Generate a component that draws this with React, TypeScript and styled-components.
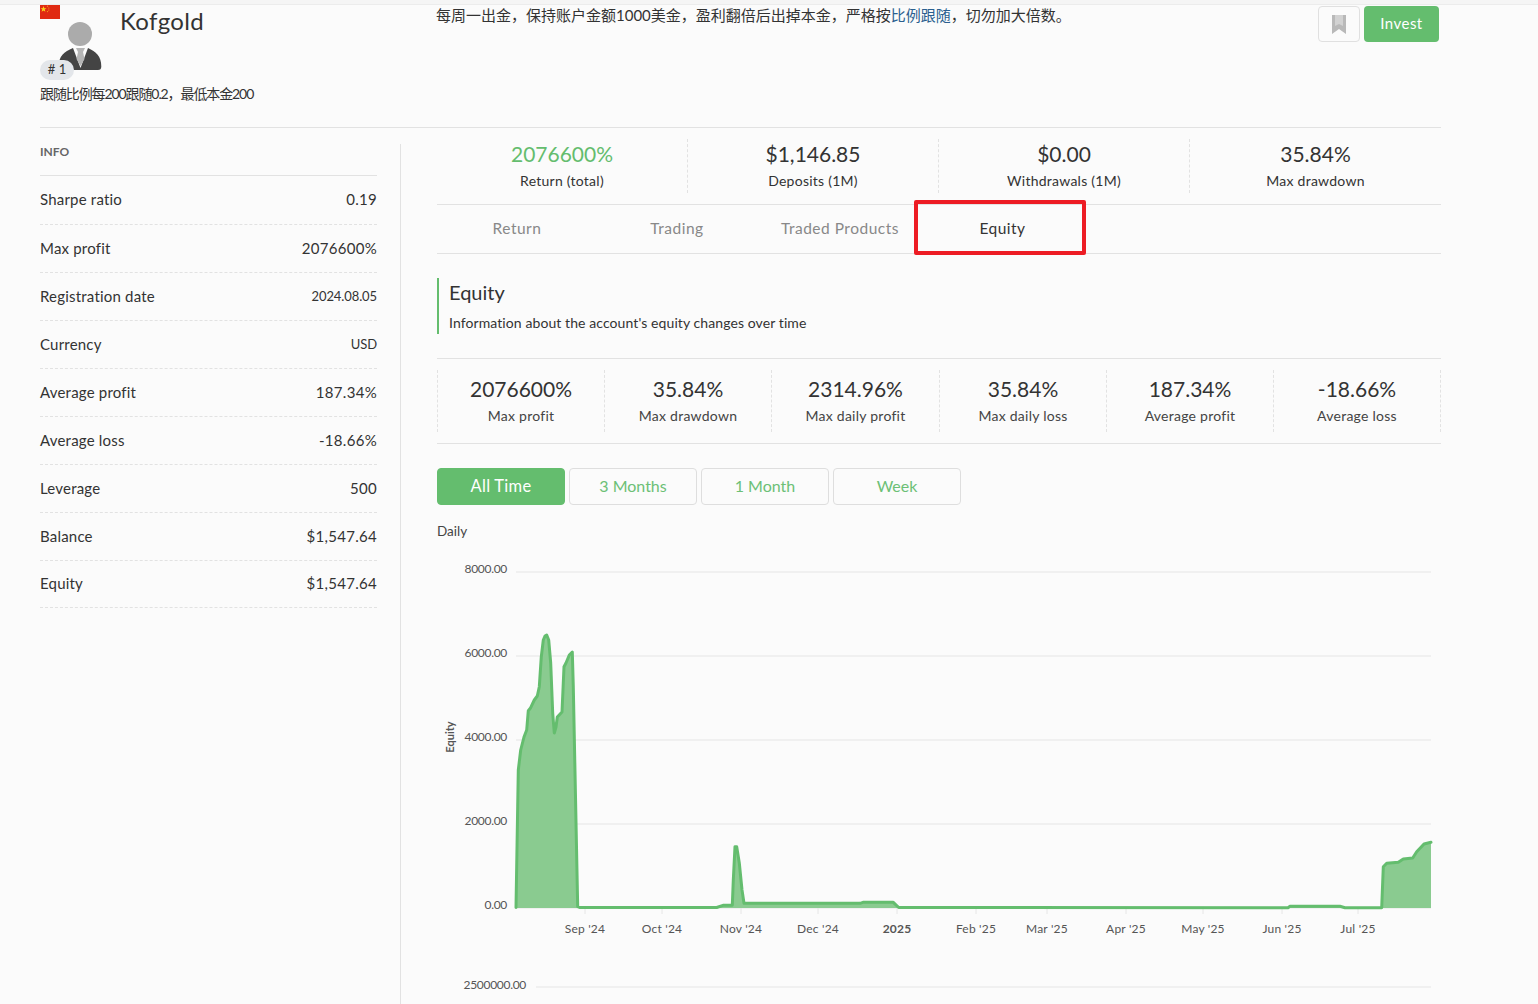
import React from "react";
import styled, { createGlobalStyle } from "styled-components";

const Global = createGlobalStyle`
  html, body { margin: 0; padding: 0; height: 1004px; overflow: hidden; background: #fbfbfb; }
  body { font-family: "Lato", "Noto Sans CJK SC", sans-serif; color: #333; font-size: 14px; }
  * { box-sizing: border-box; }
`;

const green = "#64bd6e";

const Page = styled.div`
  width: 1538px;
  height: 1004px;
  overflow: hidden;
  position: relative;
`;
const TopBand = styled.div`
  height: 5px;
  background: #f5f5f5;
  border-bottom: 1px solid #ececec;
`;
const Container = styled.div`
  padding: 0 97px 0 40px;
`;
const Header = styled.header`
  display: flex;
  height: 123px;
  border-bottom: 1px solid #e2e2e2;
`;
const Identity = styled.div`
  width: 396px;
  flex: none;
`;
const AvatarRow = styled.div`
  display: flex;
  height: 75px;
`;
const AvatarBox = styled.div`
  position: relative;
  width: 80px;
  height: 75px;
  flex: none;
`;
const Flag = styled.svg`
  position: absolute;
  left: 0;
  top: 0;
  width: 20px;
  height: 14px;
`;
const Avatar = styled.svg`
  position: absolute;
  left: 18px;
  top: 17px;
  width: 44px;
  height: 48px;
`;
const RankBadge = styled.span`
  position: absolute;
  left: 0;
  top: 55px;
  width: 34px;
  height: 20px;
  border-radius: 10px;
  background: #e3e6ea;
  font-size: 13px;
  line-height: 18px;
  text-align: center;
  color: #333;
`;
const Name = styled.h1`
  margin: 1px 0 0;
  font-size: 24px;
  line-height: 29px;
  font-weight: 400;
  color: #333;
  letter-spacing: 0.35px;
`;
const Note = styled.p`
  margin: 5px 0 0;
  font-size: 14px;
  line-height: 18px;
  letter-spacing: -1.1px;
  color: #333;
`;
const Description = styled.p`
  flex: 1;
  margin: 1px 0 0;
  font-size: 15px;
  line-height: 18px;
  color: #333;
`;
const Link = styled.span`
  color: #2a5f8f;
`;
const Actions = styled.div`
  display: flex;
  gap: 4px;
  padding: 1px 2px 0 0;
  align-items: flex-start;
`;
const BookmarkButton = styled.button`
  width: 42px;
  height: 36px;
  padding: 0;
  background: #fbfbfb;
  border: 1px solid #e0e0e0;
  border-radius: 4px;
  display: flex;
  align-items: center;
  justify-content: center;
`;
const InvestButton = styled.button`
  width: 75px;
  height: 36px;
  border: 0;
  padding: 0 0 3px;
  border-radius: 4px;
  background: ${green};
  color: #fff;
  font: inherit;
  font-size: 15px;
  letter-spacing: 0.45px;
`;
const Body = styled.div`
  display: flex;
`;
const Sidebar = styled.aside`
  width: 361px;
  flex: none;
  margin-top: 16px;
  padding-right: 23px;
  border-right: 1px solid #e2e2e2;
  height: 900px;
`;
const InfoTitle = styled.h2`
  margin: 0;
  height: 32px;
  border-bottom: 1px solid #e2e2e2;
  font-size: 12px;
  line-height: 16px;
  font-weight: 700;
  color: #666;
`;
const InfoRow = styled.div`
  display: flex;
  justify-content: space-between;
  align-items: center;
  height: 48px;
  padding-bottom: 1px;
  border-bottom: 1px dashed #e2e2e2;
  font-size: 15px;
  letter-spacing: 0.2px;
  color: #333;
  &:nth-child(2) { height: 49px; padding-bottom: 3px; }
  &:last-child { height: 47px; padding-bottom: 3px; }
`;
const InfoValue = styled.span<{ $small?: boolean }>`
  font-size: ${(p) => (p.$small ? "13px" : "15px")};
  letter-spacing: ${(p) => (p.$small ? "-0.1px" : "0.3px")};
`;
const Main = styled.main`
  width: 1004px;
  margin-left: 36px;
`;
const Summary = styled.div`
  display: grid;
  grid-template-columns: repeat(4, 1fr);
  padding-top: 11px;
  height: 77px;
  border-bottom: 1px solid #e2e2e2;
`;
const SummaryItem = styled.div`
  height: 54px;
  border-right: 1px dashed #e2e2e2;
  text-align: center;
  &:last-child { border-right: 0; }
`;
const Value = styled.div<{ $green?: boolean }>`
  font-size: 21px;
  line-height: 30px;
  margin-bottom: 2px;
  color: ${(p) => (p.$green ? green : "#333")};
`;
const Caption = styled.div`
  font-size: 14px;
  line-height: 20px;
  letter-spacing: 0.25px;
  color: #333;
`;
const Tabs = styled.nav`
  display: flex;
  height: 49px;
  border-bottom: 1px solid #e2e2e2;
`;
const Tab = styled.div<{ $active?: boolean; $w: number }>`
  width: ${(p) => p.$w}px;
  text-align: center;
  line-height: 46px;
  font-size: 15.5px;
  letter-spacing: 0.5px;
  color: ${(p) => (p.$active ? "#333" : "#888")};
`;
const Marker = styled.div`
  position: absolute;
  left: 914px;
  top: 200px;
  width: 172px;
  height: 55px;
  border: 4px solid #ed1c24;
  border-radius: 2px;
`;
const SectionHead = styled.div`
  margin-top: 24px;
  height: 56px;
  padding-left: 10px;
  border-left: 2px solid ${green};
`;
const SectionTitle = styled.h3`
  margin: 0;
  font-size: 20px;
  line-height: 28px;
  font-weight: 400;
  color: #333;
`;
const SectionText = styled.p`
  margin: 7px 0 0;
  font-size: 14px;
  line-height: 20px;
  letter-spacing: 0.09px;
  color: #333;
`;
const Metrics = styled.div`
  display: grid;
  grid-template-columns: 167px 167px 168px 167px 167px 168px;
  margin-top: 24px;
  padding: 11px 0;
  border-top: 1px solid #e2e2e2;
  border-bottom: 1px solid #e2e2e2;
  height: 86px;
`;
const MetricItem = styled.div`
  height: 62px;
  border-left: 1px dashed #e2e2e2;
  text-align: center;
  &:last-child { border-right: 1px dashed #e2e2e2; }
`;
const MetricValue = styled.div`
  font-size: 21px;
  line-height: 38px;
  margin-bottom: 2px;
  color: #333;
`;
const MetricCaption = styled.div`
  font-size: 14px;
  line-height: 12px;
  letter-spacing: 0.25px;
  color: #444;
`;
const Ranges = styled.div`
  display: flex;
  gap: 4px;
  margin-top: 24px;
`;
const RangeButton = styled.button<{ $active?: boolean }>`
  width: 128px;
  height: 37px;
  padding: 0 0 2px;
  border-radius: 4px;
  border: 1px solid ${(p) => (p.$active ? green : "#dedede")};
  background: ${(p) => (p.$active ? green : "#fbfbfb")};
  color: ${(p) => (p.$active ? "#fff" : "#6cc076")};
  font: inherit;
  font-size: ${(p) => (p.$active ? "16.5px" : "16px")};
  letter-spacing: ${(p) => (p.$active ? "0.3px" : "0")};
`;
const ChartTitle = styled.div`
  margin-top: 17px;
  font-size: 13.5px;
  line-height: 18px;
  color: #444;
`;
const ChartSvg = styled.svg`
  display: block;
  margin-top: 9px;
  width: 1004px;
  height: 465px;
  font-family: "Lato", sans-serif;
`;
const AxisText = styled.text`
  font-size: 12px;
  fill: #555;
  letter-spacing: -0.3px;
`;
const MonthText = styled.text<{ $bold?: boolean }>`
  font-size: 12px;
  fill: #555;
  font-weight: ${(p) => (p.$bold ? 700 : 400)};
  letter-spacing: 0.2px;
`;

const pts: [number, number][] = [
  [516,907.5],[518.3,770],[520.7,750],[524,737],[526.7,730],[528.3,710.7],[530.7,707.7],[534.3,700],[537.3,696],[539.3,686.7],
  [541.3,656.7],[543.3,640],[545,636],[546.7,635],[548.7,640],[550.7,663],[552.7,713],[554.3,733],[556,727],[557.3,717],[562,712],
  [564,666.7],[566,663],[569.3,655],[572.3,652],[573.3,687],[577.7,906.7],[580,907.5],[716.7,907.5],[723,905.3],[732.3,905.3],
  [733.3,880],[735,846.7],[736.7,846.7],[739.3,863],[742,890],[744,903.3],[860,903.3],[863,902.3],[893.3,902.3],[898.7,907.5],
  [1288,907.7],[1290,906.3],[1340,906.3],[1345,907.7],[1381.7,907.7],[1383.3,866.7],[1386.7,863.3],[1398.3,862.3],[1403.3,859],
  [1412.7,858],[1416.7,851.7],[1424,844],[1431,842.3],
];
const OX = 437;
const OY = 549;
const line = pts.map(([x, y]) => `${(x - OX).toFixed(1)},${(y - OY).toFixed(1)}`).join(" ");
const area = `${line} ${1431 - OX},${908 - OY} ${516 - OX},${908 - OY}`;

const yTicks = [
  ["8000.00", 572],
  ["6000.00", 656],
  ["4000.00", 740],
  ["2000.00", 824],
  ["0.00", 908],
] as const;
const xTicks: [string, number, boolean?][] = [
  ["Sep '24", 585],["Oct '24", 662],["Nov '24", 741],["Dec '24", 818],["2025", 897, true],["Feb '25", 976],
  ["Mar '25", 1047],["Apr '25", 1126],["May '25", 1203],["Jun '25", 1282],["Jul '25", 1358],
];

const info: [string, string, boolean?][] = [
  ["Sharpe ratio", "0.19"],["Max profit", "2076600%"],["Registration date", "2024.08.05", true],["Currency", "USD", true],
  ["Average profit", "187.34%"],["Average loss", "-18.66%"],["Leverage", "500"],["Balance", "$1,547.64"],["Equity", "$1,547.64"],
];
const metrics = [
  ["2076600%", "Max profit"],["35.84%", "Max drawdown"],["2314.96%", "Max daily profit"],
  ["35.84%", "Max daily loss"],["187.34%", "Average profit"],["-18.66%", "Average loss"],
];

export default function App() {
  return (
    <Page>
      <Global />
      <TopBand />
      <Container>
        <Header>
          <Identity>
            <AvatarRow>
              <AvatarBox>
                <Avatar viewBox="0 0 44 48">
                  <circle cx="22" cy="12" r="12" fill="#ababab" />
                  <path d="M0.7 44.5 C0.7 34 6 30 15 26 L22.5 46 L30 26 C38 30 43.3 34 43.3 44.5 Q43.3 48 40 48 H4 Q0.7 48 0.7 44.5 Z" fill="#444" />
                  <path d="M18 26 H27 L25 30 L26.5 37 L22.5 44 L18.5 37 L20 30 Z" fill="#b5b5b5" />
                </Avatar>
                <Flag viewBox="0 0 20 14">
                  <rect width="20" height="14" fill="#e02a12" />
                  <path d="M3.5 1 L4.3 3.2 L6.5 3.2 L4.7 4.6 L5.4 6.8 L3.5 5.4 L1.6 6.8 L2.3 4.6 L0.5 3.2 L2.7 3.2 Z" fill="#f7d51d" />
                  <circle cx="7.5" cy="1.2" r=".6" fill="#f2a81d" />
                  <circle cx="8.8" cy="3" r=".6" fill="#f2a81d" />
                  <circle cx="8.8" cy="5" r=".6" fill="#f2a81d" />
                  <circle cx="7.5" cy="6.6" r=".6" fill="#f2a81d" />
                </Flag>
                <RankBadge># 1</RankBadge>
              </AvatarBox>
              <Name>Kofgold</Name>
            </AvatarRow>
            <Note>跟随比例每200跟随0.2，最低本金200</Note>
          </Identity>
          <Description>
            每周一出金，保持账户金额1000美金，盈利翻倍后出掉本金，严格按<Link>比例跟随</Link>，切勿加大倍数。
          </Description>
          <Actions>
            <BookmarkButton aria-label="Bookmark">
              <svg width="14" height="19" viewBox="0 0 14 19">
                <path d="M0 0 H14 V19 L7 14 L0 19 Z" fill="#b9b9b9" />
                <path d="M3 0 H11 V11 L7 9 L3 11 Z" fill="#d2d2d2" />
              </svg>
            </BookmarkButton>
            <InvestButton>Invest</InvestButton>
          </Actions>
        </Header>
        <Body>
          <Sidebar>
            <InfoTitle>INFO</InfoTitle>
            {info.map(([k, v, s]) => (
              <InfoRow key={k}>
                <span>{k}</span>
                <InfoValue $small={s}>{v}</InfoValue>
              </InfoRow>
            ))}
          </Sidebar>
          <Main>
            <Summary>
              <SummaryItem><Value $green>2076600%</Value><Caption>Return (total)</Caption></SummaryItem>
              <SummaryItem><Value>$1,146.85</Value><Caption>Deposits (1M)</Caption></SummaryItem>
              <SummaryItem><Value>$0.00</Value><Caption>Withdrawals (1M)</Caption></SummaryItem>
              <SummaryItem><Value>35.84%</Value><Caption>Max drawdown</Caption></SummaryItem>
            </Summary>
            <Tabs>
              <Tab $w={160}>Return</Tab>
              <Tab $w={160}>Trading</Tab>
              <Tab $w={166}>Traded Products</Tab>
              <Tab $w={159} $active>Equity</Tab>
            </Tabs>
            <SectionHead>
              <SectionTitle>Equity</SectionTitle>
              <SectionText>Information about the account's equity changes over time</SectionText>
            </SectionHead>
            <Metrics>
              {metrics.map(([v, c], i) => (
                <MetricItem key={i}>
                  <MetricValue>{v}</MetricValue>
                  <MetricCaption>{c}</MetricCaption>
                </MetricItem>
              ))}
            </Metrics>
            <Ranges>
              <RangeButton $active>All Time</RangeButton>
              <RangeButton>3 Months</RangeButton>
              <RangeButton>1 Month</RangeButton>
              <RangeButton>Week</RangeButton>
            </Ranges>
            <ChartTitle>Daily</ChartTitle>
            <ChartSvg viewBox="0 0 1004 465">
              {yTicks.map(([t, y]) => (
                <g key={t}>
                  <line x1={516 - OX} x2={1431 - OX} y1={y - OY} y2={y - OY} stroke="#ececec" strokeWidth="1.5" />
                  <AxisText x={507 - OX} y={y + 1 - OY} textAnchor="end">{t}</AxisText>
                </g>
              ))}
              {xTicks.map(([t, x, b]) => (
                <g key={t}>
                  <line x1={x - OX} x2={x - OX} y1={908 - OY} y2={914 - OY} stroke="#e6e6e6" />
                  <MonthText $bold={b} x={x - OX} y={933 - OY} textAnchor="middle">{t}</MonthText>
                </g>
              ))}
              <text transform={`translate(${454 - OX} ${737 - OY}) rotate(-90)`} textAnchor="middle" fontSize="11" fontWeight="700" fill="#555">Equity</text>
              <polygon points={area} fill="#8acb90" />
              <polyline points={line} fill="none" stroke={green} strokeWidth="3" strokeLinejoin="round" strokeLinecap="round" />
              <line x1={536 - OX} x2={1431 - OX} y1={987 - OY} y2={987 - OY} stroke="#ececec" strokeWidth="1.5" />
              <AxisText x={526 - OX} y={989 - OY} textAnchor="end">2500000.00</AxisText>
            </ChartSvg>
          </Main>
        </Body>
      </Container>
      <Marker />
    </Page>
  );
}
